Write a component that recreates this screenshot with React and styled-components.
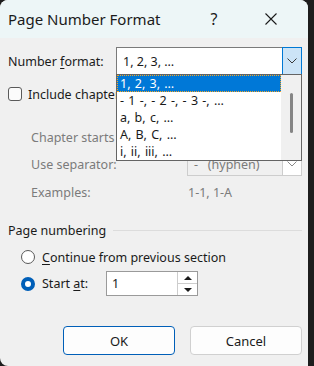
import React from 'react';
import styled, { createGlobalStyle } from 'styled-components';

const GlobalStyle = createGlobalStyle`
  html, body {
    margin: 0;
    padding: 0;
    background: #1d1d1d;
    font-family: "Noto Sans", "Open Sans", sans-serif;
  }
`;

const Dialog = styled.div`
  position: relative;
  width: 308px;
  height: 366px;
  background: #f0f0f0;
  border-radius: 8px 8px 0 8px;
  overflow: hidden;
  display: flex;
  flex-direction: column;
  color: #1a1a1a;
  font-size: 12.5px;
`;

const TitleBar = styled.div`
  height: 38px;
  flex: none;
  display: flex;
  align-items: center;
  background: #edf6f7;
  padding-left: 8px;
`;

const Title = styled.div`
  flex: 1;
  font-size: 15px;
  color: #1b1b1b;
`;

const TitleButton = styled.div`
  width: ${(p) => p.w}px;
  text-align: center;
  font-size: 16px;
  color: #1b1b1b;
  display: flex;
  justify-content: center;
`;

const Body = styled.div`
  flex: 1;
  display: flex;
  flex-direction: column;
  padding: 9px 6px 0 8px;
`;

const Row = styled.div`
  display: flex;
  align-items: center;
  height: ${(p) => p.h || 28}px;
  margin-top: ${(p) => p.mt || 0}px;
  padding-left: ${(p) => p.indent || 0}px;
  color: ${(p) => (p.disabled ? '#7b7b7b' : 'inherit')};
`;

const Label = styled.div`
  width: ${(p) => p.w}px;
  margin-right: ${(p) => p.gap || 0}px;
  flex: none;
  white-space: nowrap;
  overflow: hidden;
`;

const U = styled.span`
  text-decoration: underline;
  text-underline-offset: 2px;
`;

const Combo = styled.div`
  position: relative;
  flex: 1;
  height: ${(p) => p.h || 28}px;
  box-sizing: border-box;
  border: 1px solid ${(p) => (p.disabled ? '#cdcdcd' : '#7a7a7a')};
  background: ${(p) => (p.disabled ? '#f0f0f0' : '#fff')};
  display: flex;
  align-items: center;
  padding-left: 6px;
  color: ${(p) => (p.disabled ? '#7b7b7b' : '#1a1a1a')};
`;

const ComboText = styled.div`
  flex: 1;
  white-space: pre;
`;

const DropButton = styled.div`
  width: 20px;
  align-self: stretch;
  margin: -1px -1px -1px 0;
  box-sizing: border-box;
  display: flex;
  align-items: center;
  justify-content: center;
  background: ${(p) => (p.active ? '#cce4f7' : '#fff')};
  border: 1px solid ${(p) => (p.active ? '#0078d4' : '#cdcdcd')};
`;

const DropList = styled.div`
  position: absolute;
  left: -1px;
  right: -1px;
  top: 26px;
  height: 87px;
  box-sizing: border-box;
  border: 1px solid #646464;
  background: #fff;
  display: flex;
  z-index: 5;
`;

const Items = styled.div`
  flex: 1;
  display: flex;
  flex-direction: column;
`;

const Item = styled.div`
  height: 17px;
  flex: none;
  box-sizing: border-box;
  padding-left: 3px;
  display: flex;
  align-items: center;
  white-space: pre;
  word-spacing: 1px;
  background: ${(p) => (p.selected ? '#0078d7' : 'transparent')};
  color: ${(p) => (p.selected ? '#fff' : '#1a1a1a')};
  outline: ${(p) => (p.selected ? '1px dotted #f5a623' : 'none')};
  outline-offset: -1px;
`;

const ScrollBar = styled.div`
  width: 20px;
  background: #f0f0f0;
  display: flex;
  justify-content: center;
  padding-top: 18px;
`;

const Thumb = styled.div`
  width: 3px;
  height: 40px;
  border-radius: 2px;
  background: #858585;
`;

const Checkbox = styled.div`
  width: 14px;
  height: 14px;
  box-sizing: border-box;
  border: 1px solid #5a5a5a;
  border-radius: 3px;
  background: #fbfbfb;
  margin-right: 6px;
  flex: none;
`;

const GroupHeader = styled.div`
  display: flex;
  align-items: center;
  margin-top: 19px;
  height: 18px;
  &::after {
    content: '';
    flex: 1;
    height: 1px;
    background: #dcdcdc;
    margin-left: 7px;
  }
`;

const Radio = styled.div`
  width: 14px;
  height: 14px;
  box-sizing: border-box;
  border-radius: 50%;
  flex: none;
  margin-right: 7px;
  border: ${(p) => (p.checked ? '4px solid #005fb8' : '1px solid #595959')};
  background: #fff;
`;

const SpinBox = styled.div`
  width: 92px;
  height: 25px;
  box-sizing: border-box;
  border: 1px solid #9a9a9a;
  background: #fff;
  display: flex;
  align-items: center;
  padding-left: 5px;
`;

const SpinButtons = styled.div`
  width: 19px;
  align-self: stretch;
  display: flex;
  flex-direction: column;
  border-left: 1px solid #cdcdcd;
`;

const SpinHalf = styled.div`
  flex: 1;
  display: flex;
  align-items: center;
  justify-content: center;
  & + & {
    border-top: 1px solid #cdcdcd;
  }
`;

const Buttons = styled.div`
  margin-top: auto;
  margin-bottom: 11px;
  display: flex;
  justify-content: flex-end;
  gap: 15px;
`;

const Button = styled.div`
  width: 112px;
  height: 29px;
  box-sizing: border-box;
  border-radius: 4px;
  background: #fdfdfd;
  border: 1px solid ${(p) => (p.primary ? '#005fb8' : '#d0d0d0')};
  display: flex;
  align-items: center;
  justify-content: center;
  font-size: 13px;
  color: #1a1a1a;
`;

const Chevron = ({ color = '#3a3a3a' }) => (
  <svg width="10" height="6" viewBox="0 0 10 6">
    <path d="M0.5 0.5 L5 5 L9.5 0.5" fill="none" stroke={color} strokeWidth="1" />
  </svg>
);

const Tri = ({ up }) => (
  <svg width="8" height="4" viewBox="0 0 8 4">
    <path d={up ? 'M0 4 L4 0 L8 4 Z' : 'M0 0 L4 4 L8 0 Z'} fill="#1a1a1a" />
  </svg>
);

const formats = ['1, 2, 3, …', '- 1 -, - 2 -, - 3 -, …', 'a, b, c, …', 'A, B, C, …', 'i, ii, iii, …'];

export default function App() {
  return (
    <>
      <GlobalStyle />
      <Dialog>
        <TitleBar>
          <Title>Page Number Format</Title>
          <TitleButton w={40}>?</TitleButton>
          <TitleButton w={74}>
            <svg width="12" height="12" viewBox="0 0 12 12">
              <path d="M0.5 0.5 L11.5 11.5 M11.5 0.5 L0.5 11.5" stroke="#1b1b1b" strokeWidth="1.1" />
            </svg>
          </TitleButton>
        </TitleBar>
        <Body>
          <Row>
            <Label w={108}>
              Number <U>f</U>ormat:
            </Label>
            <Combo>
              <ComboText>{formats[0]}</ComboText>
              <DropButton active>
                <Chevron />
              </DropButton>
              <DropList>
                <Items>
                  {formats.map((f, i) => (
                    <Item key={f} selected={i === 0}>
                      {f}
                    </Item>
                  ))}
                </Items>
                <ScrollBar>
                  <Thumb />
                </ScrollBar>
              </DropList>
            </Combo>
          </Row>
          <Row mt={10} h={18}>
            <Checkbox />
            <Label w={88}>Include chapter</Label>
          </Row>
          <Row mt={22} h={24} indent={23} disabled>
            <Label w={85} gap={71}>Chapter starts</Label>
            <Combo disabled h={24}>
              <ComboText />
              <DropButton>
                <Chevron color="#8a8a8a" />
              </DropButton>
            </Combo>
          </Row>
          <Row mt={3} h={24} indent={23} disabled>
            <Label w={156}>Use separator:</Label>
            <Combo disabled h={24}>
              <ComboText>{'-   (hyphen)'}</ComboText>
              <DropButton>
                <Chevron color="#8a8a8a" />
              </DropButton>
            </Combo>
          </Row>
          <Row mt={6} h={20} indent={23} disabled>
            <Label w={157}>Examples:</Label>
            1-1, 1-A
          </Row>
          <GroupHeader>Page numbering</GroupHeader>
          <Row mt={9} h={18} indent={13}>
            <Radio />
            <U>C</U>ontinue from previous section
          </Row>
          <Row mt={5} h={25} indent={13}>
            <Radio checked />
            <Label w={64}>
              Start <U>a</U>t:
            </Label>
            <SpinBox>
              <ComboText>1</ComboText>
              <SpinButtons>
                <SpinHalf>
                  <Tri up />
                </SpinHalf>
                <SpinHalf>
                  <Tri />
                </SpinHalf>
              </SpinButtons>
            </SpinBox>
          </Row>
          <Buttons>
            <Button primary>OK</Button>
            <Button>Cancel</Button>
          </Buttons>
        </Body>
      </Dialog>
    </>
  );
}
